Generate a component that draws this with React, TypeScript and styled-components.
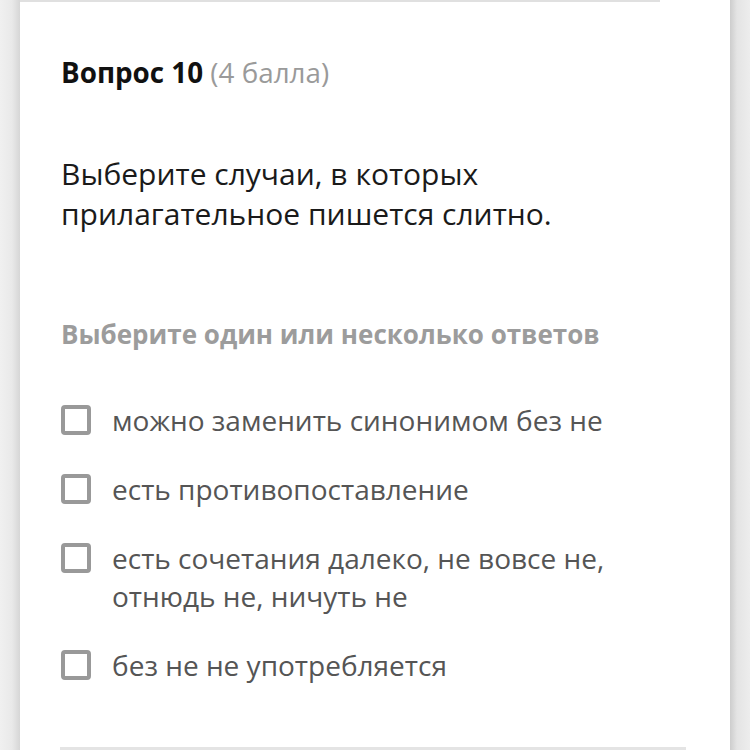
import React from "react";
import styled, { createGlobalStyle } from "styled-components";

const GlobalStyle = createGlobalStyle`
  html, body {
    margin: 0;
    padding: 0;
    background: #ececec;
    font-family: "Open Sans", "Noto Sans", sans-serif;
  }
`;

const options = [
  "можно заменить синонимом без не",
  "есть противопоставление",
  "есть сочетания далеко, не вовсе не, отнюдь не, ничуть не",
  "без не не употребляется",
];

export default function App() {
  return (
    <>
      <GlobalStyle />
      <Page>
        <Gutter side="left" />
        <Card>
          <TopRule />
          <Header>
            <strong>Вопрос 10</strong> <Points>(4 балла)</Points>
          </Header>
          <Question>
            Выберите случаи, в которых
            <br />
            прилагательное пишется слитно.
          </Question>
          <Hint>Выберите один или несколько ответов</Hint>
          <OptionList>
            {options.map((text) => (
              <Option key={text}>
                <Box />
                <OptionText>{text}</OptionText>
              </Option>
            ))}
          </OptionList>
          <BottomRule />
        </Card>
        <Gutter side="right" />
      </Page>
    </>
  );
}

const Page = styled.div`
  display: flex;
  width: 750px;
  height: 750px;
  overflow: hidden;
`;

const Gutter = styled.div<{ side: "left" | "right" }>`
  width: 20px;
  flex-shrink: 0;
  background: ${({ side }) =>
    side === "left"
      ? "linear-gradient(to right, #f0f0f0, #e9e9e9 60%, #d6d6d6)"
      : "linear-gradient(to right, #cdcdcd, #e4e4e4 35%, #ededed)"};
`;

const Card = styled.div`
  flex: 1;
  background: #fff;
  display: flex;
  flex-direction: column;
  padding-left: 41px;
`;

const TopRule = styled.div`
  height: 2px;
  width: 640px;
  margin-left: -41px;
  background: #e0e0e0;
`;

const Header = styled.div`
  margin-top: 52px;
  font-size: 27.8px;
  line-height: 36px;
  color: #111;
  strong {
    font-weight: 700;
  }
`;

const Points = styled.span`
  color: #9a9a9a;
  font-weight: 400;
`;

const Question = styled.div`
  margin-top: 64px;
  font-size: 30px;
  line-height: 40px;
  color: #1a1a1a;
`;

const Hint = styled.div`
  margin-top: 83px;
  font-size: 26px;
  line-height: 34px;
  font-weight: 700;
  color: #9c9c9c;
`;

const OptionList = styled.div`
  margin-top: 50px;
  display: flex;
  flex-direction: column;
  gap: 31px;
`;

const Option = styled.div`
  display: flex;
  align-items: flex-start;
  gap: 21px;
`;

const Box = styled.div`
  width: 30px;
  height: 30px;
  box-sizing: border-box;
  border: 4px solid #999;
  border-radius: 4px;
  flex-shrink: 0;
  margin-top: 4px;
`;

const OptionText = styled.div`
  font-size: 28px;
  line-height: 38px;
  color: #555;
  max-width: 560px;
`;

const BottomRule = styled.div`
  margin-top: auto;
  height: 3px;
  width: 626px;
  margin-left: -1px;
  background: #e4e4e4;
`;
